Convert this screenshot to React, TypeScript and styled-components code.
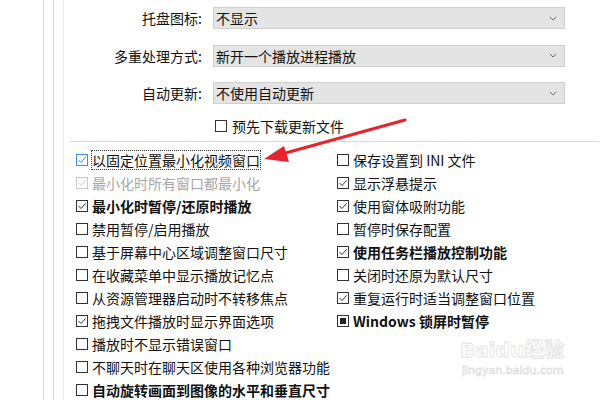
import React from 'react';
import styled, { createGlobalStyle } from 'styled-components';

const Global = createGlobalStyle`
  html, body { margin: 0; padding: 0; background: #fff; }
  body { font-family: "Noto Sans CJK SC", "Noto Sans", sans-serif; color: #111; }
`;

const Page = styled.div`
  position: relative;
  width: 600px;
  height: 400px;
  overflow: hidden;
  background: #fff;
  display: flex;
`;

const Gutter = styled.div`
  width: 43px;
  flex: none;
`;

const Outer = styled.div`
  width: 550px;
  flex: none;
  display: flex;
  border-left: 1px solid #d6d6d6;
  border-right: 1px solid #e6e6e6;
  padding: 0 17px 0 9px;
  box-sizing: content-box;
`;

const Inner = styled.div`
  flex: 1;
  display: flex;
  border-left: 1px solid #dcdcdc;
  border-right: 1px solid #dcdcdc;
  padding-left: 9px;
`;

const Inner2 = styled.div`
  flex: 1;
  display: flex;
  flex-direction: column;
  border-left: 1px solid #ececec;
`;

const Form = styled.div`
  display: grid;
  grid-template-columns: 142px 352px;
  column-gap: 7px;
  row-gap: 15.5px;
  padding-top: 7px;
`;

const Label = styled.div`
  font-size: 14px;
  line-height: 22px;
  height: 22px;
  text-align: right;
  white-space: nowrap;
  color: #111;
  padding-right: 4px;
`;

const Select = styled.div`
  height: 22px;
  box-sizing: border-box;
  background: #e4e4e4;
  border: 1px solid #d0d0d0;
  display: flex;
  align-items: center;
  justify-content: space-between;
  padding: 0 7px 0 2px;
  font-size: 14px;
  line-height: 20px;
  color: #111;
`;

const Chevron = () => (
  <svg width="8" height="5" viewBox="0 0 8 5">
    <path d="M0.8 0.8 L4 4 L7.2 0.8" fill="none" stroke="#6a6a6a" strokeWidth="1" />
  </svg>
);

const PreRow = styled.div`
  display: flex;
  align-items: center;
  gap: 5px;
  height: 18px;
  margin-top: 12.5px;
  padding-left: 151px;
`;

const Divider = styled.div`
  height: 0;
  border-top: 1px solid #d8d8d8;
  margin: 6.5px 3px 0 6px;
`;

const Columns = styled.div`
  display: grid;
  grid-template-columns: 261px 1fr;
  margin-top: 6.5px;
  padding-left: 12px;
`;

const Col = styled.div`
  display: flex;
  flex-direction: column;
`;

const Row = styled.div`
  display: flex;
  align-items: center;
  gap: 4px;
  height: 23px;
`;

type Tone = 'normal' | 'focus' | 'disabled';

const Box = styled.span<{ $tone: Tone; $bold?: boolean }>`
  width: 12px;
  height: 12px;
  box-sizing: border-box;
  flex: none;
  display: flex;
  align-items: center;
  justify-content: center;
  background: #fff;
  border: ${(p) => (p.$bold ? '1.6px' : '1px')} solid
    ${(p) => (p.$tone === 'focus' ? '#3a8ee6' : p.$tone === 'disabled' ? '#c8c8c8' : '#333')};
`;

const Mixed = styled.span`
  width: 6px;
  height: 6px;
  background: #222;
`;

const Text = styled.span<{ $bold?: boolean; $disabled?: boolean; $focus?: boolean }>`
  font-size: 14px;
  line-height: 18px;
  white-space: nowrap;
  font-weight: ${(p) => (p.$bold ? 700 : 400)};
  color: ${(p) => (p.$disabled ? '#a6a6a6' : '#111')};
  outline: ${(p) => (p.$focus ? '1px dotted #444' : 'none')};
  outline-offset: 0;
`;

type State = 'on' | 'off' | 'mixed';

const Check: React.FC<{ state: State; tone?: Tone; bold?: boolean }> = ({ state, tone = 'normal', bold }) => {
  const color = tone === 'focus' ? '#3a8ee6' : tone === 'disabled' ? '#c8c8c8' : '#333';
  return (
    <Box $tone={tone} $bold={bold}>
      {state === 'on' && (
        <svg width="10" height="10" viewBox="0 0 10 10">
          <path d="M1.5 5 L4 7.5 L8.6 2.4" fill="none" stroke={color} strokeWidth="1" />
        </svg>
      )}
      {state === 'mixed' && <Mixed />}
    </Box>
  );
};

type Item = { text: string; state: State; bold?: boolean; disabled?: boolean; focus?: boolean };

const left: Item[] = [
  { text: '以固定位置最小化视频窗口', state: 'on', focus: true },
  { text: '最小化时所有窗口都最小化', state: 'on', disabled: true },
  { text: '最小化时暂停/还原时播放', state: 'on', bold: true },
  { text: '禁用暂停/启用播放', state: 'off' },
  { text: '基于屏幕中心区域调整窗口尺寸', state: 'off' },
  { text: '在收藏菜单中显示播放记忆点', state: 'off' },
  { text: '从资源管理器启动时不转移焦点', state: 'off' },
  { text: '拖拽文件播放时显示界面选项', state: 'on' },
  { text: '播放时不显示错误窗口', state: 'off' },
  { text: '不聊天时在聊天区使用各种浏览器功能', state: 'off' },
  { text: '自动旋转画面到图像的水平和垂直尺寸', state: 'off', bold: true },
];

const right: Item[] = [
  { text: '保存设置到 INI 文件', state: 'off' },
  { text: '显示浮悬提示', state: 'on' },
  { text: '使用窗体吸附功能', state: 'on' },
  { text: '暂停时保存配置', state: 'off' },
  { text: '使用任务栏播放控制功能', state: 'on', bold: true },
  { text: '关闭时还原为默认尺寸', state: 'off' },
  { text: '重复运行时适当调整窗口位置', state: 'on' },
  { text: 'Windows 锁屏时暂停', state: 'mixed', bold: true },
];

const CheckRow: React.FC<{ item: Item }> = ({ item }) => (
  <Row>
    <Check
      state={item.state}
      tone={item.focus ? 'focus' : item.disabled ? 'disabled' : 'normal'}
      bold={item.bold && item.state !== 'on'}
    />
    <Text $bold={item.bold} $disabled={item.disabled} $focus={item.focus}>
      {item.text}
    </Text>
  </Row>
);

const Overlay = styled.svg`
  position: absolute;
  left: 0;
  top: 0;
  pointer-events: none;
`;

const Watermark = styled.div`
  position: absolute;
  left: 460px;
  top: 336px;
  display: flex;
  flex-direction: column;
  align-items: flex-start;
  pointer-events: none;
  color: transparent;
  -webkit-text-stroke: 0.8px #e2e2e2;
  font-family: "DejaVu Sans", "Noto Sans CJK SC", sans-serif;
`;

const WmTop = styled.div`
  font-size: 20px;
  line-height: 28px;
  font-weight: 700;
  white-space: nowrap;
`;

const WmSub = styled.div`
  font-size: 11px;
  line-height: 14px;
  white-space: nowrap;
  margin-left: 2px;
`;

export default function App() {
  return (
    <Page>
      <Global />
      <Gutter />
      <Outer>
        <Inner>
          <Inner2>
            <Form>
              <Label>托盘图标:</Label>
              <Select>
                <span>不显示</span>
                <Chevron />
              </Select>
              <Label>多重处理方式:</Label>
              <Select>
                <span>新开一个播放进程播放</span>
                <Chevron />
              </Select>
              <Label>自动更新:</Label>
              <Select>
                <span>不使用自动更新</span>
                <Chevron />
              </Select>
            </Form>
            <PreRow>
              <Check state="off" />
              <Text>预先下载更新文件</Text>
            </PreRow>
            <Divider />
            <Columns>
              <Col>
                {left.map((it) => (
                  <CheckRow key={it.text} item={it} />
                ))}
              </Col>
              <Col>
                {right.map((it) => (
                  <CheckRow key={it.text} item={it} />
                ))}
              </Col>
            </Columns>
          </Inner2>
        </Inner>
      </Outer>
      <Watermark>
        <WmTop>Baidu经验</WmTop>
        <WmSub>jingyan.baidu.com</WmSub>
      </Watermark>
      <Overlay width="600" height="400" viewBox="0 0 600 400">
        <line x1="405" y1="120" x2="282" y2="154" stroke="#e8232b" strokeWidth="3" strokeLinecap="round" />
        <polygon points="264,159 284,146 289,162" fill="#e8232b" />
      </Overlay>
    </Page>
  );
}
